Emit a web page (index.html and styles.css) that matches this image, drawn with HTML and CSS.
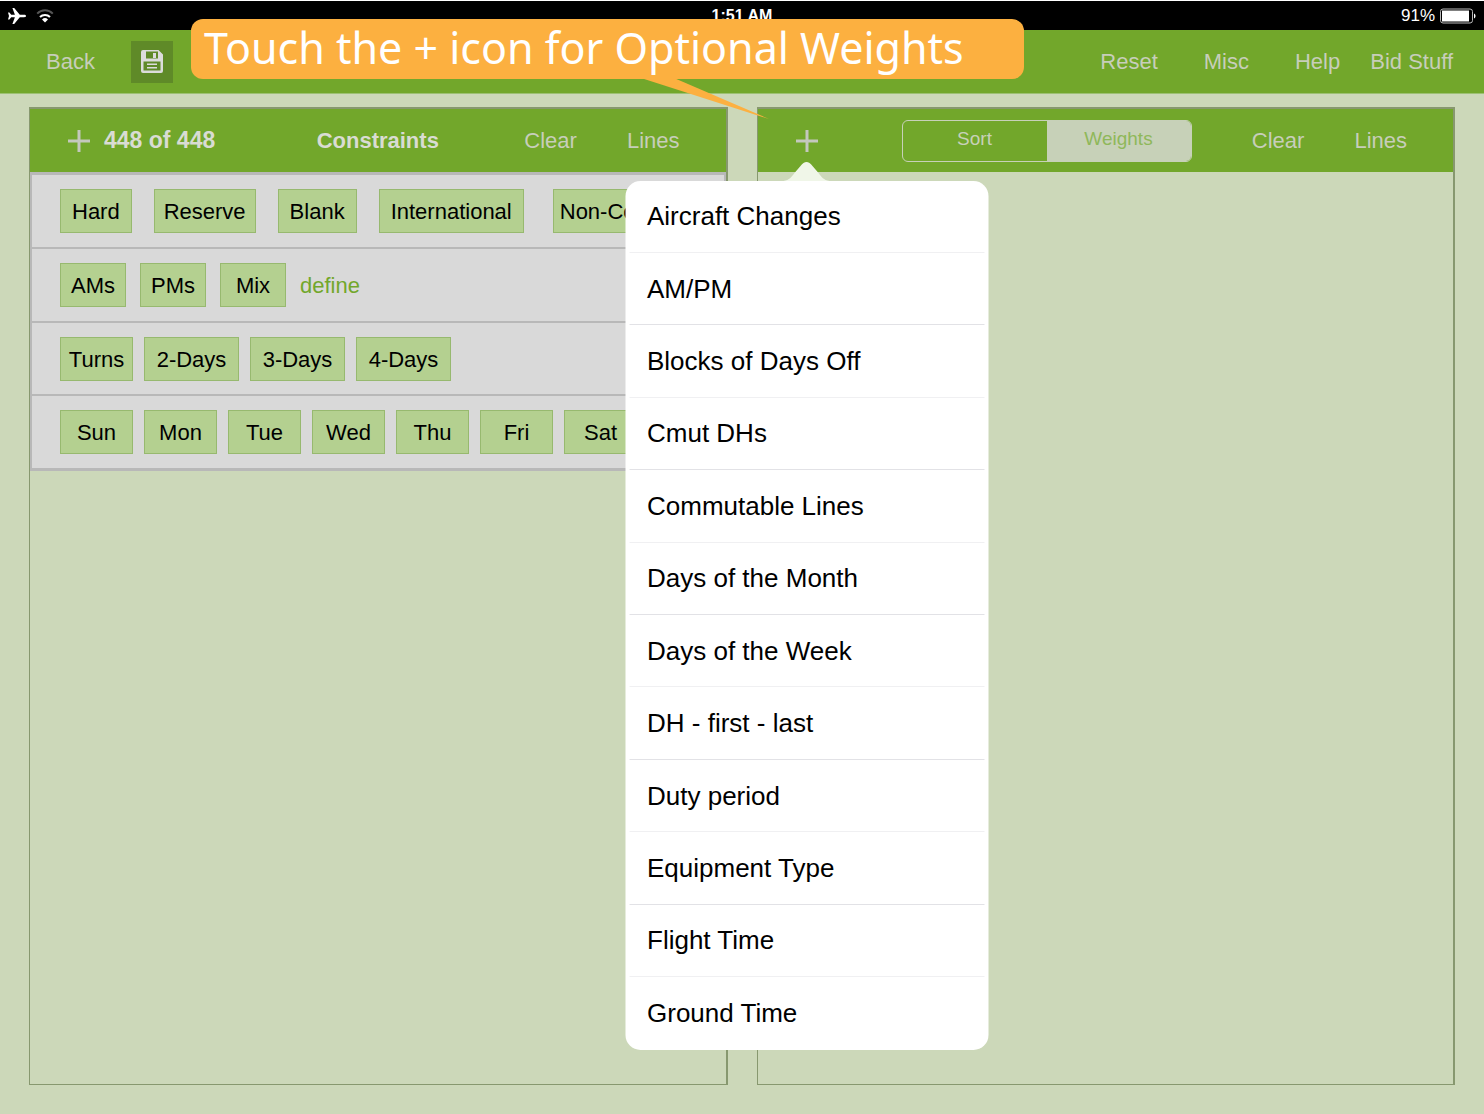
FILE: index.html
```html
<!DOCTYPE html>
<html lang="en">
<head>
<meta charset="utf-8">
<title>Constraints and Weights</title>
<link rel="stylesheet" href="styles.css">
</head>
<body>
<div class="app">
  <div class="status">
    <div class="status-left">
      <svg width="18" height="16" viewBox="0 0 18 16" aria-hidden="true"><path fill="#fff" d="M18 8c0-.8-.8-1.2-1.8-1.2h-4.4L6.2 0H4.4l2.500 6.800H3.200L1.400 4.400H0L1 8l-1 3.600h1.400l1.800-2.400h3.700L4.400 16h1.800l5.600-6.800h4.400c1 0 1.800-.4 1.800-1.200z"/></svg>
      <svg width="18" height="14" viewBox="0 0 18 14" fill="none" aria-hidden="true"><path d="M1.200 4.600a11 11 0 0 1 15.600 0" stroke="#555" stroke-width="2"/><path d="M4 8a7 7 0 0 1 10 0" stroke="#fff" stroke-width="2"/><path fill="#fff" d="M9 13.500L6 10.500a4.300 4.300 0 0 1 6 0z"/></svg>
    </div>
    <div class="status-time">1:51 AM</div>
    <div class="status-right">91%
      <svg width="36" height="16" viewBox="0 0 36 16" aria-hidden="true"><rect x=".5" y="1" width="32" height="14" rx="2.500" fill="none" stroke="#bbb"/><rect x="2" y="2.500" width="27" height="11" fill="#fff"/><path fill="#fff" d="M34 5.500c2 .8 2 4.200 0 5z"/></svg>
    </div>
  </div>

  <header class="toolbar">
    <button class="link">Back</button>
    <button class="save" aria-label="Save">
      <svg width="22" height="23" viewBox="0 0 22 23" aria-hidden="true"><path fill="#dcdcdc" fill-rule="evenodd" d="M2 0h15.500L22 4.500V21a2 2 0 0 1-2 2H2a2 2 0 0 1-2-2V2a2 2 0 0 1 2-2zM5 1.500V8.500h12V1.500zM2.500 11.500V20.500h17V11.500z"/><path fill="#dcdcdc" d="M12 3h3v5h-3zM6 13.500h10V15H6zM6 17h10v1.500H6z"/></svg>
    </button>
    <nav class="toolbar-nav">
      <button class="link">Reset</button>
      <button class="link">Misc</button>
      <button class="link">Help</button>
      <button class="link bid">Bid Stuff</button>
    </nav>
  </header>

  <main class="panels">
    <section class="panel">
      <div class="panel-head constraints-head">
        <div class="count">
          <button class="plus" aria-label="Add constraint"><svg width="22" height="22" viewBox="0 0 22 22" aria-hidden="true"><path d="M11 0v22M0 11h22" stroke="#c4c8bd" stroke-width="3"/></svg></button>
          <span>448 of 448</span>
        </div>
        <h2 class="title">Constraints</h2>
        <div class="actions">
          <button class="link">Clear</button>
          <button class="link">Lines</button>
        </div>
      </div>
      <div class="filters">
        <div class="row row-lines">
          <button class="chip">Hard</button>
          <button class="chip snug">Reserve</button>
          <button class="chip">Blank</button>
          <button class="chip">International</button>
          <button class="chip tight">Non-Conus</button>
        </div>
        <div class="row row-time">
          <button class="chip">AMs</button>
          <button class="chip">PMs</button>
          <button class="chip">Mix</button>
          <button class="define">define</button>
        </div>
        <div class="row row-trips">
          <button class="chip">Turns</button>
          <button class="chip long">2-Days</button>
          <button class="chip long">3-Days</button>
          <button class="chip long">4-Days</button>
        </div>
        <div class="row row-days">
          <button class="chip">Sun</button>
          <button class="chip">Mon</button>
          <button class="chip">Tue</button>
          <button class="chip">Wed</button>
          <button class="chip">Thu</button>
          <button class="chip">Fri</button>
          <button class="chip">Sat</button>
        </div>
      </div>
    </section>

    <section class="panel">
      <div class="panel-head weights-head">
        <div class="anchor">
          <button class="plus" aria-label="Add weight"><svg width="22" height="22" viewBox="0 0 22 22" aria-hidden="true"><path d="M11 0v22M0 11h22" stroke="#c4c8bd" stroke-width="3"/></svg></button>
          <div class="popover">
            <svg class="arrow" width="46" height="19" viewBox="0 0 46 19" aria-hidden="true"><path fill="#f0f6e8" d="M0 19C6 18 8 15 11 11L17 4C21-1.300 25-1.300 29 4L35 11C38 15 40 18 46 19z"/></svg>
            <div class="menu">
              <button class="item">Aircraft Changes</button>
              <button class="item">AM/PM</button>
              <button class="item">Blocks of Days Off</button>
              <button class="item">Cmut DHs</button>
              <button class="item">Commutable Lines</button>
              <button class="item">Days of the Month</button>
              <button class="item">Days of the Week</button>
              <button class="item">DH - first - last</button>
              <button class="item">Duty period</button>
              <button class="item">Equipment Type</button>
              <button class="item">Flight Time</button>
              <button class="item">Ground Time</button>
            </div>
          </div>
        </div>
        <div class="segments">
          <button class="segment">Sort</button>
          <button class="segment selected">Weights</button>
        </div>
        <div class="actions">
          <button class="link">Clear</button>
          <button class="link">Lines</button>
        </div>
      </div>
    </section>
  </main>

  <div class="callout">Touch the + icon for Optional Weights
    <svg class="tail" width="130" height="42" viewBox="0 0 130 42" aria-hidden="true"><path fill="#fcb040" d="M0 0h33L128 41z"/></svg>
  </div>
</div>
</body>
</html>
```
FILE: styles.css
```css
* { box-sizing: border-box; }

body {
  margin: 0;
  background: #ccd8b9;
  font-family: "Liberation Sans", Arial, sans-serif;
  font-size: 22px;
}

button {
  margin: 0;
  padding: 0;
  border: 0;
  background: none;
  color: inherit;
  font: inherit;
  white-space: nowrap;
}

svg { display: block; }

.app {
  position: relative;
  display: flex;
  flex-direction: column;
  min-height: 100vh;
}

/* Status bar */
.status {
  display: grid;
  grid-template-columns: 1fr auto 1fr;
  align-items: center;
  height: 30px;
  padding: 0 8px;
  border-top: 1px solid #fff;
  background: #000;
  color: #fff;
  font-size: 17px;
}
.status-left { display: flex; align-items: center; gap: 10px; }
.status-time { font-size: 16px; font-weight: bold; }
.status-right {
  display: flex;
  align-items: center;
  justify-content: flex-end;
  gap: 5px;
}

/* Toolbar */
.toolbar {
  display: flex;
  align-items: center;
  height: 64px;
  padding: 0 31px 0 46px;
  border-bottom: 1px solid #9cc173;
  background: #72a72b;
}
.link { color: #c7ceba; }
.save {
  display: grid;
  place-items: center;
  width: 42px;
  height: 42px;
  margin-left: 36px;
  background: #5f8a28;
}
.toolbar-nav { display: flex; gap: 46px; margin-left: auto; }
.bid { margin-left: -16px; }

/* Panels */
.panels {
  flex: 1;
  display: grid;
  grid-template-columns: 1fr 1fr;
  gap: 29px;
  padding: 13px 29px 29px;
}
.panel {
  min-width: 0;
  border: 1px solid #87986f;
  border-top-width: 2px;
  border-right-width: 2px;
}
.panel-head {
  height: 63px;
  padding: 0 38px;
  align-items: center;
  background: #72a72b;
}
.constraints-head {
  display: grid;
  grid-template-columns: 1fr auto 1fr;
}
.plus { display: block; }
.count {
  display: flex;
  align-items: center;
  gap: 14px;
  color: #d9dcd3;
  font-size: 23px;
  font-weight: bold;
}
.title {
  margin: 0;
  color: #d9dcd3;
  font-size: 22px;
  font-weight: bold;
}
.actions {
  display: flex;
  justify-content: flex-end;
  gap: 50px;
  margin-right: 8px;
}
.weights-head { display: flex; }
.weights-head .actions { margin-left: auto; }

.filters {
  overflow: hidden;
  border: 2px solid #b8b8b8;
  border-width: 3px 2px;
  background: #d9d9d9;
}
.row {
  display: flex;
  height: 74px;
  padding: 14px 28px;
  border-bottom: 2px solid #b8b8b8;
}
.row-lines { gap: 22px; }
.row-time { gap: 14px; }
.row-trips { height: 73px; gap: 11px; }
.row-days { height: 72px; gap: 11px; border-bottom: 0; }
.chip {
  flex: none;
  height: 44px;
  padding: 1px 11px 0;
  border: 1px solid #97b96f;
  background: #b4d090;
  color: #000;
}
.snug { padding: 1px 9px 0; }
.tight { margin-left: 7px; padding: 1px 6px 0; }
.row-time .chip { width: 66px; padding: 1px 0 0; }
.row-trips .chip, .row-days .chip { width: 73px; padding: 1px 0 0; }
.row-trips .long { width: 95px; }
.define { padding-top: 1px; color: #72a72b; }

/* Sort / Weights switch */
.segments {
  display: grid;
  grid-template-columns: 1fr 1fr;
  width: 290px;
  height: 42px;
  margin-left: 84px;
  overflow: hidden;
  border: 1px solid #c7d1b8;
  border-radius: 6px;
  color: #c7d1b8;
  font-size: 19px;
}
.segment { padding-bottom: 3px; }
.selected { background: #c7d1b8; color: #8fb85a; }

/* Popover menu */
.anchor { position: relative; }
.popover {
  position: absolute;
  z-index: 2;
  top: 32px;
  left: 50%;
  width: 363px;
  transform: translateX(-50%);
}
.arrow { margin: 0 auto; }
.menu {
  display: grid;
  grid-auto-rows: 1fr;
  height: 869px;
  padding: 0 4px;
  border-radius: 15px;
  background: #fff;
  color: #000;
  font-size: 26px;
}
.item {
  padding: 1px 0 0 18px;
  border-bottom: 1px solid #e2e2e6;
  text-align: left;
}
.item:nth-child(odd) { border-bottom-color: #f0f0f2; }
.item:last-child { border-bottom: 0; }

/* Tutorial callout */
.callout {
  position: absolute;
  z-index: 3;
  top: 19px;
  left: 191px;
  width: 833px;
  height: 60px;
  padding-left: 13px;
  border-radius: 12px;
  background: #fcb040;
  color: #fff;
  font-family: "Noto Sans", "Open Sans", sans-serif;
  font-size: 43px;
  line-height: 58px;
  white-space: nowrap;
}
.tail {
  position: absolute;
  top: 59px;
  left: 450px;
}
```
